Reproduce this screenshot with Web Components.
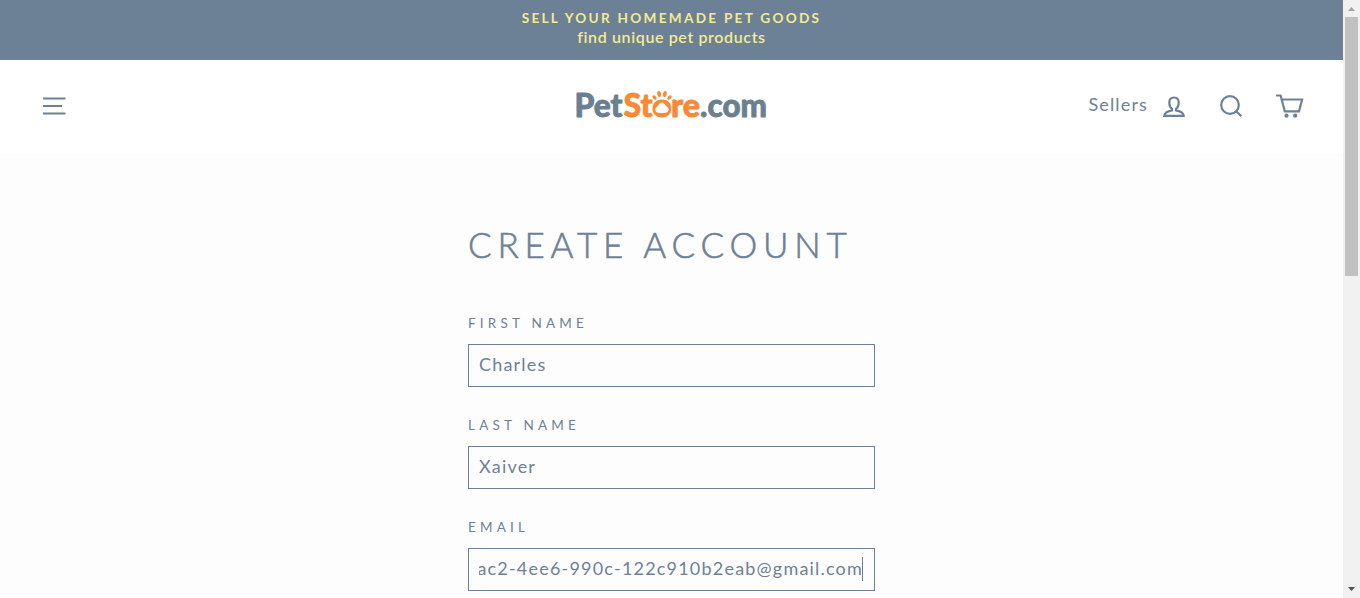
<!DOCTYPE html>
<html lang="en">
<head>
<meta charset="utf-8">
<title>Create Account</title>
<style>
html,body{margin:0;height:100%;overflow:hidden}
body{font-family:Lato,"Open Sans",sans-serif;color:#6d8196;background:#fdfdfd}
</style>
</head>
<body>
<pet-page></pet-page>
<script>
const define=(name,html,setup)=>customElements.define(name,class extends HTMLElement{
  constructor(){super();this.attachShadow({mode:'open'}).innerHTML=html;}
  connectedCallback(){if(setup)setup(this,this.shadowRoot);}
});

define('promo-bar',`<style>
:host{display:block;height:60px;box-sizing:border-box;padding-top:9px;background:#6d8196;color:#f3ea92;text-align:center}
.t{font-size:13.6px;line-height:19px;font-weight:700;letter-spacing:2.28px}
.s{font-size:16px;line-height:20px;font-weight:600;letter-spacing:.62px;margin-top:-1px}
</style><div class="t"><slot name="title"></slot></div><div class="s"><slot></slot></div>`);

define('store-logo',`<style>
:host{display:block;width:196px;height:40px}
svg{display:block}
text{font-family:Lato,sans-serif;font-weight:900;font-size:31.5px;fill:#6a7f8f;stroke:#6a7f8f;stroke-width:.8;stroke-linejoin:round}
.o{fill:#f68a35;stroke:#f68a35}
</style><svg width="196" height="40" viewBox="0 0 196 40">
<text x="0.500" y="31" textLength="48" lengthAdjust="spacingAndGlyphs">Pet</text>
<text class="o" x="49.500" y="31" textLength="29" lengthAdjust="spacingAndGlyphs">St</text>
<text class="o" x="78" y="31" textLength="20" lengthAdjust="spacingAndGlyphs">o</text>
<text class="o" x="97" y="31" textLength="29" lengthAdjust="spacingAndGlyphs">re</text>
<text x="126" y="31" textLength="67" lengthAdjust="spacingAndGlyphs">.com</text>
<path fill="#fff" d="M88 16.500c2.200 0 2.600 2.300 4.500 3.700 2.700 1.800 2.700 4.700.8 6-1.600 1.100-3.500.5-5.300.5s-3.700.6-5.300-.5c-1.900-1.300-1.900-4.200.8-6 1.900-1.400 2.300-3.700 4.500-3.700z"/>
<g fill="#f68a35"><ellipse cx="80.500" cy="11.500" rx="1.700" ry="2.500" transform="rotate(-40 80.500 11.500)"/><ellipse cx="85.200" cy="8" rx="1.900" ry="3" transform="rotate(-12 85.200 8)"/><ellipse cx="90.800" cy="8" rx="1.900" ry="3" transform="rotate(12 90.800 8)"/><ellipse cx="95.500" cy="11.500" rx="1.700" ry="2.500" transform="rotate(40 95.500 11.500)"/></g>
</svg>`);

const ICONS={
 menu:'<path d="M2 5.500h22.500M2 13h19M2 20.500h22.500"/>',
 user:'<path d="M14 4.500c-3.200 0-4.700 2.200-4.700 5.200 0 2.700 1 5 2.700 6.100v1.500c-3.800.7-7.300 1.600-7.700 5.500h19.400c-.4-3.900-3.900-4.800-7.700-5.500v-1.500c1.700-1.100 2.700-3.400 2.700-6.100C18.700 6.700 17.200 4.500 14 4.500z"/>',
 search:'<circle cx="13" cy="12" r="8.800"/><path d="M19.200 18.200l5.200 5"/>',
 cart:'<path d="M0 2.500h4.600l4.200 15.900h14.200L26.100 6.500H5.700"/><g fill="currentColor" stroke="none"><circle cx="10.500" cy="22.700" r="2.100"/><circle cx="19.200" cy="22.700" r="2.100"/></g>'
};
define('line-icon',`<style>:host{display:block;width:28px;height:28px}svg{display:block;overflow:visible}</style><svg width="28" height="28" viewBox="0 0 28 28" fill="none" stroke="currentColor" stroke-width="2.200"></svg>`,
 (el,r)=>{r.querySelector('svg').innerHTML=ICONS[el.getAttribute('name')];});

define('site-header',`<style>
:host{display:grid;grid-template-columns:1fr auto 1fr;height:93px;box-sizing:border-box;padding:0 41px;background:#fff;align-items:center}
store-logo{margin-top:-2px}
.r{display:flex;justify-content:flex-end;align-items:center}
.l{font-size:18px;line-height:28px;letter-spacing:1.15px;margin:-5px 12px 0 0}
.u{margin-right:29px}.q{margin-right:31px}.c{margin-right:-2px}
</style><line-icon name="menu"></line-icon><store-logo></store-logo><div class="r"><span class="l">Sellers</span><line-icon class="u" name="user"></line-icon><line-icon class="q" name="search"></line-icon><line-icon class="c" name="cart"></line-icon></div>`);

define('form-field',`<style>
:host{display:block;height:102px}
.n{display:block;font-size:13.5px;line-height:20px;letter-spacing:4.2px;text-transform:uppercase;height:31px}
.b{display:flex;align-items:center;height:43px;box-sizing:border-box;border:1px solid #6d8196;padding:0 11px 3px 10px}
.v{flex:1;min-width:0;overflow:hidden;display:flex;font-size:18px;line-height:28px;letter-spacing:1.2px;white-space:nowrap}
:host([caret]) .v{justify-content:flex-end}
:host([caret]) .v span{margin-right:-1px}
i{display:none;width:1px;height:24px;background:#6d8196;margin-top:2px;flex:none}
:host([caret]) i{display:block}
</style><span class="n"></span><div class="b"><div class="v"><span><slot></slot></span></div><i></i></div>`,
 (el,r)=>{r.querySelector('.n').textContent=el.getAttribute('label');});

define('account-form',`<style>
:host{display:block;width:407px;margin:0 auto;padding-top:66px}
h1{margin:0 0 44px;font-size:35px;line-height:50px;font-weight:300;letter-spacing:5.8px;text-transform:uppercase;white-space:nowrap;-webkit-text-stroke:.6px #6d8196}
</style><h1>Create Account</h1>
<form-field label="First Name">Charles</form-field>
<form-field label="Last Name">Xaiver</form-field>
<form-field label="Email" caret>ac2-4ee6-990c-122c910b2eab@gmail.com</form-field>`);

define('scroll-rail',`<style>
:host{display:flex;flex-direction:column;width:17px;height:100%;background:#f1f1f1}
svg{display:block;flex:none}.thumb{width:13px;height:259px;margin:0 2px;background:#c1c1c1}.gap{flex:1}
</style><svg width="17" height="17"><path fill="#a3a3a3" d="M5 11l3.500-4L12 11z"/></svg><div class="thumb"></div><div class="gap"></div><svg width="17" height="17"><path fill="#505050" d="M5 6h7L8.500 10z"/></svg>`);

define('pet-page',`<style>
:host{display:grid;grid-template-columns:1fr 17px;height:598px;overflow:hidden}
main{height:598px;overflow:hidden;background:#fdfdfd}
</style><main><promo-bar><span slot="title">SELL YOUR HOMEMADE PET GOODS</span>find unique pet products</promo-bar><site-header></site-header><account-form></account-form></main><scroll-rail></scroll-rail>`);
</script>
</body>
</html>
